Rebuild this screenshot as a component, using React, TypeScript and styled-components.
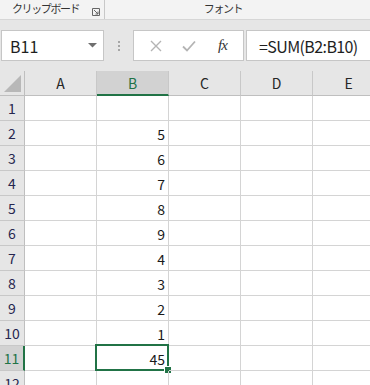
import React from 'react';
import styled, { createGlobalStyle } from 'styled-components';

const GlobalStyle = createGlobalStyle`
  html, body {
    margin: 0;
    padding: 0;
    background: #e6e6e6;
    overflow: hidden;
  }
  * {
    box-sizing: border-box;
  }
`;

const UI_FONT = `"Noto Sans CJK JP", "Noto Sans", sans-serif`;
const GREEN = '#217346';

const Window = styled.div`
  width: 370px;
  height: 385px;
  overflow: hidden;
  font-family: ${UI_FONT};
  color: #262626;
`;

const Ribbon = styled.div`
  height: 20px;
  background: #f3f3f3;
  border-bottom: 1px solid #d6d6d6;
  display: flex;
  align-items: stretch;
`;

const RibbonGroup = styled.div<{ width: number; center?: boolean }>`
  width: ${(p) => p.width}px;
  display: flex;
  align-items: center;
  justify-content: ${(p) => (p.center ? 'center' : 'flex-start')};
  padding-left: ${(p) => (p.center ? 0 : 12)}px;
  font-size: 11px;
  letter-spacing: -1.4px;
  line-height: 1;
  color: #333;
  position: relative;
  padding-bottom: 2px;
`;

const GroupDivider = styled.div`
  width: 1px;
  background: #c8c8c8;
`;

const Launcher = styled.svg`
  position: absolute;
  right: 4px;
  top: 8px;
`;

const FormulaBar = styled.div`
  height: 51px;
  padding-top: 10px;
  display: flex;
  align-items: flex-start;
  background: #e6e6e6;
`;

const NameBox = styled.div`
  width: 103px;
  height: 31px;
  margin-left: 1px;
  background: #fff;
  border: 1px solid #c6c6c6;
  display: flex;
  align-items: center;
  padding-left: 8px;
  padding-right: 6px;
  font-size: 16px;
  color: #1e1e1e;
  justify-content: space-between;
`;

const Dots = styled.div`
  width: 29px;
  height: 31px;
  display: flex;
  flex-direction: column;
  align-items: center;
  justify-content: center;
  gap: 2px;

  span {
    width: 2px;
    height: 2px;
    background: #a6a6a6;
  }
`;

const FxBox = styled.div`
  width: 111px;
  height: 31px;
  background: #fff;
  border: 1px solid #c6c6c6;
  display: flex;
  align-items: center;
  justify-content: space-around;
  padding: 0 6px;
`;

const FxText = styled.span`
  font-family: "Liberation Serif", serif;
  font-style: italic;
  font-size: 15px;
  color: #333;
  letter-spacing: -1px;
  margin-left: 2px;
`;

const FormulaInput = styled.div`
  flex: 1;
  height: 31px;
  margin-left: 2px;
  background: #fff;
  border: 1px solid #c6c6c6;
  border-right: none;
  display: flex;
  align-items: center;
  padding-left: 12px;
  font-size: 16px;
  letter-spacing: -0.6px;
  color: #1e1e1e;
  white-space: nowrap;
`;

const Grid = styled.div`
  display: grid;
  grid-template-columns: 25px repeat(5, 72px);
  grid-template-rows: 25px;
  grid-auto-rows: 25px;
  background: #fff;
`;

const Corner = styled.div`
  background: #e6e6e6;
  border-right: 1px solid #bfbfbf;
  border-bottom: 1px solid #bfbfbf;
  position: relative;

  &::after {
    content: '';
    position: absolute;
    right: 3px;
    bottom: 3px;
    width: 0;
    height: 0;
    border-left: 17px solid transparent;
    border-bottom: 17px solid #b8b8b8;
  }
`;

const ColHead = styled.div<{ active?: boolean }>`
  background: ${(p) => (p.active ? '#d2d2d2' : '#e6e6e6')};
  border-right: 1px solid #c8c8c8;
  border-bottom: ${(p) => (p.active ? `2px solid ${GREEN}` : '1px solid #bfbfbf')};
  display: flex;
  align-items: center;
  justify-content: center;
  font-size: 14px;
  color: ${(p) => (p.active ? GREEN : '#262626')};
  padding-top: ${(p) => (p.active ? 1 : 0)}px;
`;

const RowHead = styled.div<{ active?: boolean }>`
  background: ${(p) => (p.active ? '#d2d2d2' : '#e6e6e6')};
  border-right: ${(p) => (p.active ? `2px solid ${GREEN}` : '1px solid #bfbfbf')};
  border-bottom: 1px solid #c8c8c8;
  display: flex;
  align-items: center;
  justify-content: center;
  font-size: 14px;
  color: ${(p) => (p.active ? GREEN : '#262650')};
`;

const Cell = styled.div`
  border-right: 1px solid #d4d4d4;
  border-bottom: 1px solid #d4d4d4;
  display: flex;
  align-items: center;
  justify-content: flex-end;
  padding-right: 3px;
  padding-top: 2px;
  font-size: 14px;
  color: #1a1a1a;
  position: relative;
`;

const Selection = styled.div`
  position: absolute;
  left: -2px;
  top: -2px;
  right: -1px;
  bottom: -1px;
  border: 2px solid ${GREEN};
  pointer-events: none;

  &::after {
    content: '';
    position: absolute;
    right: -4px;
    bottom: -4px;
    width: 6px;
    height: 6px;
    background: ${GREEN};
    outline: 1px solid #fff;
  }
`;

const columns = ['A', 'B', 'C', 'D', 'E'];
const values: Record<number, string> = {
  2: '5',
  3: '6',
  4: '7',
  5: '8',
  6: '9',
  7: '4',
  8: '3',
  9: '2',
  10: '1',
  11: '45',
};

const App = () => {
  const rows = Array.from({ length: 12 }, (_, i) => i + 1);
  return (
    <Window>
      <GlobalStyle />
      <Ribbon>
        <RibbonGroup width={104}>
          クリップボード
          <Launcher width="8" height="8" viewBox="0 0 8 8">
            <path d="M0.5 0.5 H7.5 V7.5 H0.5 Z" fill="none" stroke="#666" strokeWidth="1" />
            <path d="M2 2 L6 6 M6 3.5 V6 H3.5" fill="none" stroke="#666" strokeWidth="1" />
          </Launcher>
        </RibbonGroup>
        <GroupDivider />
        <RibbonGroup width={236} center>
          フォント
        </RibbonGroup>
      </Ribbon>
      <FormulaBar>
        <NameBox>
          <span>B11</span>
          <svg width="9" height="5" viewBox="0 0 9 5">
            <path d="M0 0 H9 L4.5 4.5 Z" fill="#6f6f6f" />
          </svg>
        </NameBox>
        <Dots>
          <span />
          <span />
          <span />
        </Dots>
        <FxBox>
          <svg width="12" height="12" viewBox="0 0 12 12">
            <path d="M1 1 L11 11 M11 1 L1 11" stroke="#b4b4b4" strokeWidth="1.4" />
          </svg>
          <svg width="14" height="12" viewBox="0 0 14 12">
            <path d="M1 6.5 L5 10.5 L13 1.5" fill="none" stroke="#b4b4b4" strokeWidth="1.8" />
          </svg>
          <FxText>fx</FxText>
        </FxBox>
        <FormulaInput>=SUM(B2:B10)</FormulaInput>
      </FormulaBar>
      <Grid>
        <Corner />
        {columns.map((c) => (
          <ColHead key={c} active={c === 'B'}>
            {c}
          </ColHead>
        ))}
        {rows.map((r) => (
          <React.Fragment key={r}>
            <RowHead active={r === 11}>{r}</RowHead>
            {columns.map((c) => (
              <Cell key={c}>
                {c === 'B' ? values[r] : null}
                {c === 'B' && r === 11 ? <Selection /> : null}
              </Cell>
            ))}
          </React.Fragment>
        ))}
      </Grid>
    </Window>
  );
};

export default App;
